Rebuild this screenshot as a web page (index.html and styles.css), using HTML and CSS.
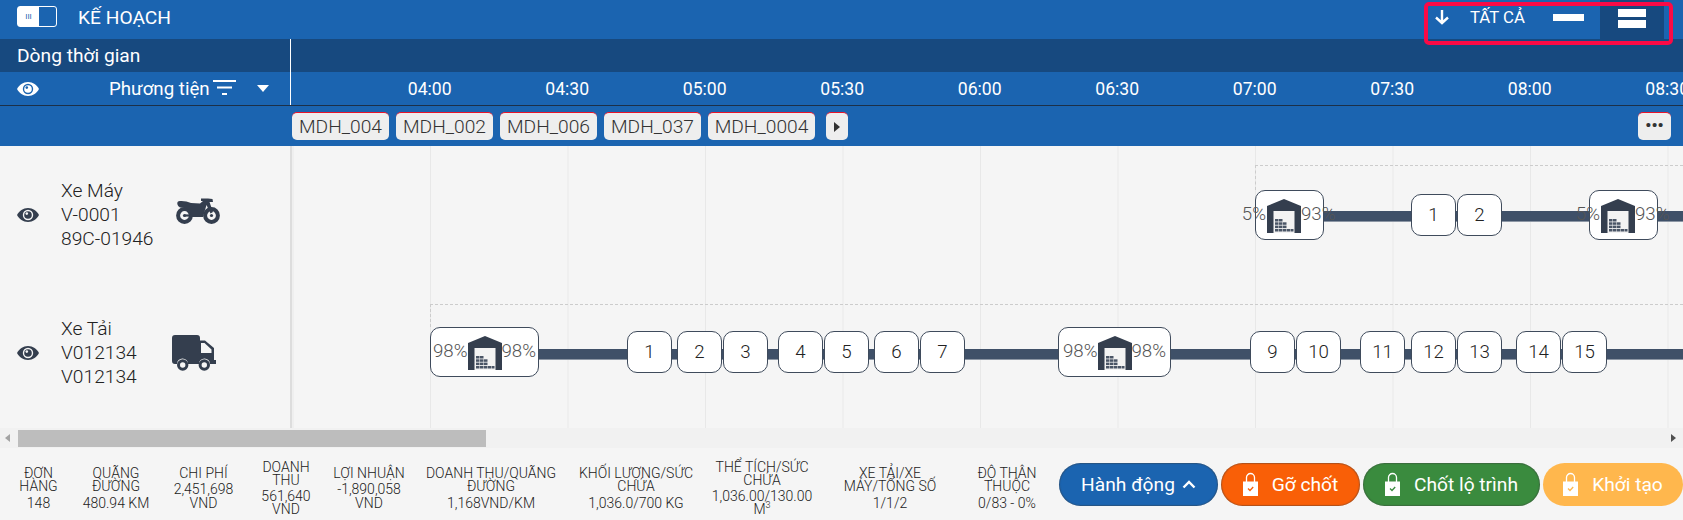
FILE: index.html
```html
<html>
    <head>
        <title>Kế hoạch</title>
        <meta charset="utf-8">
        <link rel="stylesheet" href="styles.css">
    </head>
    <body>
        <svg class="defs" width="0" height="0">
            <symbol id="eye" viewBox="0 0 22 14">
                <path d="M11 0C6 0 2.200 3 0 7c2.200 4 6 7 11 7s8.800-3 11-7c-2.200-4-6-7-11-7z" fill="currentColor"/>
                <circle cx="11" cy="7" r="5.200" class="eye-ring"/>
                <circle cx="11" cy="7" r="3.800" fill="currentColor"/>
                <circle cx="9.800" cy="5.600" r="1.300" class="eye-ring"/>
            </symbol>
            <symbol id="lock" viewBox="0 0 15 24">
                <path d="M3.500 10V5.500a4 4 0 0 1 8 0V10" fill="none" stroke="#fff" stroke-width="1.300"/>
                <rect x="0" y="9.500" width="15" height="14.500" fill="#fff"/>
                <path d="M5 16.500l2 2 3.200-3.500" fill="none" stroke="currentColor" stroke-width="1.300"/>
            </symbol>
            <symbol id="store" viewBox="0 0 34 34">
                <rect x="6" y="11" width="22" height="23" fill="#f3f3f3"/>
                <path d="M17 0L34 7V34H27.500V12H6.500V34H0V7z" fill="#343e4e"/>
                <g fill="#4a5566">
                    <rect x="8" y="20" width="3.500" height="2.500"/><rect x="12" y="20" width="3.500" height="2.500"/>
                    <rect x="8" y="23.300" width="3.500" height="2.500"/><rect x="12" y="23.300" width="3.500" height="2.500"/><rect x="16" y="23.300" width="3.500" height="2.500"/>
                    <rect x="8" y="26.600" width="3.500" height="2.500"/><rect x="12" y="26.600" width="3.500" height="2.500"/><rect x="16" y="26.600" width="3.500" height="2.500"/>
                    <rect x="8" y="30" width="3.500" height="2.500"/><rect x="12" y="30" width="3.500" height="2.500"/><rect x="16" y="30" width="3.500" height="2.500"/><rect x="20" y="30" width="3.500" height="2.500"/><rect x="24" y="30" width="2.500" height="2.500"/>
                </g>
            </symbol>
        </svg>

        <div class="topbar">
            <div class="toggle"><span class="toggle-on">III</span><span class="toggle-off"></span></div>
            <div class="title">KẾ HOẠCH</div>
            <div class="view-tools">
                <svg class="down-arrow" viewBox="0 0 16 16"><path d="M8 1v13M2 8.500L8 14l6-5.500" fill="none" stroke="#fff" stroke-width="2.400"/></svg>
                <span class="all">TẤT CẢ</span>
                <span class="density"><i></i></span>
                <span class="density active"><i></i><i></i></span>
            </div>
        </div>
        <div class="tools-frame"></div>

        <div class="band dark">
            <div class="side side-title">Dòng thời gian</div>
        </div>

        <div class="band times">
            <div class="side side-head">
                <svg class="eye eye-light"><use href="#eye"/></svg>
                <span class="head-label">Phương tiện</span>
                <svg class="filter" viewBox="0 0 23 15"><path d="M0 1h23M4 7.500h15M9 14h5" stroke="#fff" stroke-width="2.200"/></svg>
                <span class="caret"></span>
            </div>
            <div class="ticks">
                <span>04:00</span><span>04:30</span><span>05:00</span><span>05:30</span><span>06:00</span>
                <span>06:30</span><span>07:00</span><span>07:30</span><span>08:00</span><span>08:30</span>
            </div>
        </div>

        <div class="chips">
            <span class="chip">MDH_004</span>
            <span class="chip">MDH_002</span>
            <span class="chip">MDH_006</span>
            <span class="chip">MDH_037</span>
            <span class="chip">MDH_0004</span>
            <span class="chip chip-arrow"><b></b></span>
            <span class="chip chip-more">•••</span>
        </div>

        <div class="plan">
            <div class="vehicles">
                <div class="vehicle">
                    <svg class="eye"><use href="#eye"/></svg>
                    <div class="vehicle-text">Xe Máy<br>V-0001<br>89C-01946</div>
                    <svg class="bike" viewBox="0 0 44 26">
                        <circle cx="8.500" cy="17.500" r="6.400" fill="none" stroke="#343e4e" stroke-width="4"/>
                        <circle cx="35.500" cy="17.500" r="6.400" fill="none" stroke="#343e4e" stroke-width="4"/>
                        <path d="M2 3.500C6 2.500 11 3.500 15 5L24 5.500 27 3H25V.5H32L36.500 1 37 4H33.500L37 14 34.500 15.500 30.500 7 27 19H15C15 12 10 9 4 9.500 1.500 8 .5 5 2 3.500z" fill="#343e4e"/>
                        <path d="M8.500 17.500H15" stroke="#343e4e" stroke-width="2.200"/>
                        <circle cx="8.500" cy="17.500" r="1.600" fill="#343e4e"/>
                        <circle cx="35.500" cy="17.500" r="1.600" fill="#343e4e"/>
                    </svg>
                </div>
                <div class="vehicle">
                    <svg class="eye"><use href="#eye"/></svg>
                    <div class="vehicle-text">Xe Tải<br>V012134<br>V012134</div>
                    <svg class="truck" viewBox="0 0 44 36">
                        <path d="M3 0H25a3 3 0 0 1 3 3V5.500H33L42 13V25H44V29H38a5.500 5.500 0 0 0-11 0H16a5.500 5.500 0 0 0-11 0H3a3 3 0 0 1-3-3V3a3 3 0 0 1 3-3z" fill="#343e4e"/>
                        <path d="M29 8H32.500L39.500 14.500V18H29z" fill="#f5f5f5"/>
                        <circle cx="10.700" cy="30" r="4.200" fill="#f5f5f5" stroke="#343e4e" stroke-width="3"/>
                        <circle cx="32.300" cy="30" r="4.200" fill="#f5f5f5" stroke="#343e4e" stroke-width="3"/>
                    </svg>
                </div>
            </div>
            <div class="canvas">
                <div class="guide" style="left:963px;top:19px;height:25px"></div>
                <div class="guide" style="left:138px;top:158px;height:23px"></div>

                <div class="road" style="left:1032px;top:65px;width:360px"></div>
                <div class="stop depot" style="left:963px;top:44px;width:69px"><span class="pct pct-l">5%</span><svg><use href="#store"/></svg><span class="pct pct-r">93%</span></div>
                <div class="stop" style="left:1119px;top:48px;height:42px">1</div>
                <div class="stop" style="left:1165px;top:48px;height:42px">2</div>
                <div class="stop depot" style="left:1297px;top:44px;width:69px"><span class="pct pct-l">5%</span><svg><use href="#store"/></svg><span class="pct pct-r">93%</span></div>

                <div class="road" style="left:247px;top:203px;width:1145px"></div>
                <div class="stop depot wide" style="left:138px;top:181px"><span class="pct">98%</span><svg><use href="#store"/></svg><span class="pct">98%</span></div>
                <div class="stop" style="left:335px;top:185px">1</div>
                <div class="stop" style="left:385px;top:185px">2</div>
                <div class="stop" style="left:431px;top:185px">3</div>
                <div class="stop" style="left:486px;top:185px">4</div>
                <div class="stop" style="left:532px;top:185px">5</div>
                <div class="stop" style="left:582px;top:185px">6</div>
                <div class="stop" style="left:628px;top:185px">7</div>
                <div class="stop depot wide" style="left:766px;top:181px;width:113px"><span class="pct">98%</span><svg><use href="#store"/></svg><span class="pct">98%</span></div>
                <div class="stop" style="left:958px;top:185px">9</div>
                <div class="stop" style="left:1004px;top:185px">10</div>
                <div class="stop" style="left:1068px;top:185px">11</div>
                <div class="stop" style="left:1119px;top:185px">12</div>
                <div class="stop" style="left:1165px;top:185px">13</div>
                <div class="stop" style="left:1224px;top:185px">14</div>
                <div class="stop" style="left:1270px;top:185px">15</div>
            </div>
        </div>

        <div class="scrollbar">
            <span class="arrow-left"></span>
            <span class="thumb"></span>
            <span class="arrow-right"></span>
        </div>

        <div class="summary">
            <div class="stats">
                <div class="stat">ĐƠN<br>HÀNG<p>148</p></div>
                <div class="stat">QUÃNG<br>ĐƯỜNG<p>480.94 KM</p></div>
                <div class="stat">CHI PHÍ<p>2,451,698<br>VND</p></div>
                <div class="stat">DOANH<br>THU<p>561,640<br>VND</p></div>
                <div class="stat">LỢI NHUẬN<p>-1,890,058<br>VND</p></div>
                <div class="stat">DOANH THU/QUÃNG<br>ĐƯỜNG<p>1,168VND/KM</p></div>
                <div class="stat">KHỐI LƯỢNG/SỨC<br>CHỨA<p>1,036.0/700 KG</p></div>
                <div class="stat">THỂ TÍCH/SỨC<br>CHỨA<p>1,036.00/130.00<br>M<sup>3</sup></p></div>
                <div class="stat">XE TẢI/XE<br>MÁY/TỔNG SỐ<p>1/1/2</p></div>
                <div class="stat">ĐỘ THÂN<br>THUỘC<p>0/83 - 0%</p></div>
            </div>
            <div class="actions">
                <button class="btn btn-blue">Hành động <svg class="chevron" viewBox="0 0 14 9"><path d="M1.500 7.500L7 2l5.500 5.500" fill="none" stroke="#fff" stroke-width="2.400"/></svg></button>
                <button class="btn btn-orange"><svg class="lock"><use href="#lock"/></svg>Gỡ chốt</button>
                <button class="btn btn-green"><svg class="lock"><use href="#lock"/></svg>Chốt lộ trình</button>
                <button class="btn btn-yellow"><svg class="lock"><use href="#lock"/></svg>Khởi tạo</button>
            </div>
        </div>
    </body>
</html>
```

FILE: styles.css
```css
body {
    margin: 0;
    width: 1683px;
    height: 520px;
    overflow: hidden;
    position: relative;
    font-family: "Roboto", sans-serif;
    font-size: 17.6px;
    color: #444;
    background: #f5f5f5;
}
.defs {
    position: absolute;
}

/* top bar */
.topbar {
    height: 39px;
    background: #1b64b0;
    color: #fff;
    display: flex;
    align-items: flex-start;
}
.toggle {
    display: flex;
    width: 40px;
    height: 21px;
    margin: 6px 0 0 17px;
    border: 1px solid #fff;
    border-radius: 3px;
    box-sizing: border-box;
}
.toggle-on {
    width: 21px;
    background: #fff;
    color: #1b64b0;
    font-size: 8px;
    line-height: 19px;
    text-align: center;
}
.toggle-off {
    flex: 1;
}
.title {
    margin: 7px 0 0 21px;
    line-height: 21px;
    font-size: 19.2px;
}
.view-tools {
    margin-left: auto;
    margin-right: 19px;
    display: flex;
    align-items: flex-start;
    height: 39px;
}
.down-arrow {
    width: 16px;
    height: 16px;
    margin-top: 9px;
    flex: none;
}
.all {
    font-size: 16.8px;
    margin: 8px 0 0 20px;
    line-height: 18px;
    width: 66px;
    flex: none;
    white-space: nowrap;
}
.density {
    width: 64px;
    height: 39px;
    box-sizing: border-box;
    padding-top: 14px;
    display: flex;
    flex-direction: column;
    align-items: center;
    gap: 3px;
}
.density i {
    width: 31px;
    height: 7px;
    background: #fff;
}
.density.active {
    background: #17497f;
    padding-top: 9px;
}
.density.active i {
    width: 28px;
    height: 8px;
}
.tools-frame {
    position: absolute;
    left: 1424px;
    top: 2px;
    width: 249px;
    height: 43px;
    box-sizing: border-box;
    border: 4px solid #fb0a46;
    border-radius: 5px;
}

/* header bands */
.band {
    display: flex;
    color: #fff;
}
.dark {
    height: 33px;
    background: #17497f;
}
.times {
    height: 33px;
    background: #1b64b0;
    border-bottom: 1px solid #1c3048;
}
.side {
    width: 290px;
    box-sizing: content-box;
    border-right: 1px solid #fff;
    flex: none;
    display: flex;
    align-items: center;
}
.side-title {
    padding-left: 17px;
    width: 273px;
    font-size: 19.2px;
}
.eye {
    width: 22px;
    height: 14px;
    margin-left: 17px;
    flex: none;
    color: #343e4e;
    --eye-bg: #f5f5f5;
}
.eye-ring {
    fill: var(--eye-bg);
}
.eye-light {
    color: #fff;
    --eye-bg: #1b64b0;
}
.head-label {
    margin-left: 70px;
    font-size: 18.7px;
}
.filter {
    width: 23px;
    height: 15px;
    margin: -2px 0 0 3px;
    flex: none;
}
.caret {
    margin: 0 0 0 21px;
    border: 6px solid transparent;
    border-top: 7px solid #fff;
    border-bottom: 0;
}
.ticks {
    display: flex;
    padding-left: 70px;
    align-items: center;
}
.ticks span {
    width: 137.5px;
    flex: none;
    text-align: center;
}

/* order chips */
.chips {
    height: 40px;
    background: #1b64b0;
    display: flex;
    align-items: flex-start;
    padding: 6px 0 0 292px;
    box-sizing: border-box;
    position: relative;
}
.chip {
    height: 28px;
    width: 97px;
    margin-right: 7px;
    box-sizing: border-box;
    background: #eee;
    border-top: 1px solid #e8132a;
    border-radius: 5px;
    font-size: 19.2px;
    font-weight: 300;
    line-height: 27px;
    text-align: center;
    color: #333;
}
.chip:nth-child(5) {
    width: 107px;
    margin-right: 11px;
}
.chip-arrow {
    width: 22px;
    display: flex;
    align-items: center;
    justify-content: center;
}
.chip-arrow b {
    border: 5px solid transparent;
    border-left: 6px solid #333;
    border-right: 0;
}
.chip-more {
    width: 33px;
    margin: 0;
    position: absolute;
    left: 1638px;
    top: 6px;
    font-size: 17px;
    font-weight: 700;
    line-height: 25px;
}

/* vehicles and the time line */
.plan {
    height: 282px;
    display: flex;
}
.vehicles {
    width: 290px;
    flex: none;
    border-right: 2px solid #ddd;
}
.vehicle {
    height: 141px;
    display: flex;
    position: relative;
}
.vehicle .eye {
    margin-top: 62px;
}
.vehicle:last-child .eye {
    margin-top: 59px;
}
.vehicle-text {
    margin: 33px 0 0 22px;
    line-height: 24px;
    font-size: 19.2px;
    font-weight: 300;
    color: #222;
    width: 115px;
}
.vehicle:last-child .vehicle-text {
    margin-top: 30px;
}
.bike {
    position: absolute;
    left: 176px;
    top: 52px;
    width: 44px;
    height: 26px;
}
.truck {
    position: absolute;
    left: 172px;
    top: 48px;
    width: 44px;
    height: 36px;
}
.canvas {
    flex: 1;
    position: relative;
    overflow: hidden;
    background-image: linear-gradient(90deg, #e8e8e8 1px, transparent 1px);
    background-size: 137.5px 100%;
    background-position: 138px 0;
}
.canvas::before {
    content: "";
    position: absolute;
    left: 963px;
    right: 0;
    top: 19px;
    border-top: 1px dashed #ccc;
}
.canvas::after {
    content: "";
    position: absolute;
    left: 138px;
    right: 0;
    top: 158px;
    border-top: 1px dashed #ccc;
}
.guide {
    position: absolute;
    border-left: 1px dashed #ccc;
}
.road {
    position: absolute;
    height: 10px;
    background: #3f5068;
    box-shadow: 0 1px 0 #8d97a5;
}
.stop {
    position: absolute;
    width: 45px;
    height: 42px;
    box-sizing: border-box;
    border: 1px solid #3f4b5c;
    border-radius: 10px;
    background: #fff;
    display: flex;
    align-items: center;
    justify-content: center;
    font-size: 18.7px;
    font-weight: 300;
    color: #222;
}
.depot {
    height: 50px;
    justify-content: flex-start;
    padding-left: 11px;
}
.depot svg {
    width: 34px;
    height: 34px;
    flex: none;
    margin-top: 1px;
}
.wide {
    width: 109px;
    justify-content: center;
    padding-left: 0;
}
.pct {
    font-size: 18.7px;
    font-weight: 300;
    color: #555;
    margin-top: -2px;
}
.pct-l {
    position: absolute;
    right: 57px;
}
.pct-r {
    position: absolute;
    left: 45px;
}

/* scrollbar */
.scrollbar {
    height: 20px;
    background: #f1f1f1;
    position: relative;
}
.thumb {
    position: absolute;
    left: 18px;
    top: 2px;
    width: 468px;
    height: 17px;
    background: #bdbdbd;
}
.arrow-left,
.arrow-right {
    position: absolute;
    top: 6px;
    border: 4px solid transparent;
}
.arrow-left {
    left: 5px;
    border-right: 5px solid #a3a3a3;
    border-left: 0;
}
.arrow-right {
    right: 7px;
    border-left: 5px solid #505050;
    border-right: 0;
}

/* bottom summary */
.summary {
    height: 72px;
    display: flex;
    align-items: center;
}
.stats {
    display: grid;
    grid-template-columns: 61px 94px 81px 84px 82px 162px 128px 124px 132px 102px;
    padding: 9px 0 0 8px;
    width: 1050px;
    flex: none;
    align-items: center;
}
.stat {
    font-size: 14px;
    line-height: 13.2px;
    font-weight: 300;
    color: #222;
    text-align: center;
    white-space: nowrap;
}
.stat p {
    margin: 3px 0 0 0;
}
.stat sup {
    font-size: 9px;
    line-height: 0;
}
.actions {
    display: flex;
    margin-left: 1px;
    gap: 3px;
}
.btn {
    height: 43px;
    border: 0;
    border-radius: 22px;
    color: #fff;
    font-family: "Roboto", sans-serif;
    font-size: 19.2px;
    display: flex;
    align-items: center;
    justify-content: center;
    box-shadow: inset 0 0 1px 1px rgba(60, 60, 60, 0.4);
    padding: 0;
}
.btn-blue {
    width: 159px;
    background: #1b64b0;
}
.btn-orange {
    width: 139px;
    background: #f95f07;
}
.btn-green {
    width: 177px;
    background: #3a8b3e;
}
.btn-yellow {
    width: 140px;
    background: #ffb74d;
    box-shadow: none;
}
.chevron {
    width: 14px;
    height: 9px;
    margin-left: 7px;
}
.lock {
    width: 15px;
    height: 24px;
    margin-right: 14px;
}
.btn-orange .lock {
    color: #f95f07;
}
.btn-green .lock {
    color: #3a8b3e;
}
.btn-yellow .lock {
    color: #ffb74d;
}
```
